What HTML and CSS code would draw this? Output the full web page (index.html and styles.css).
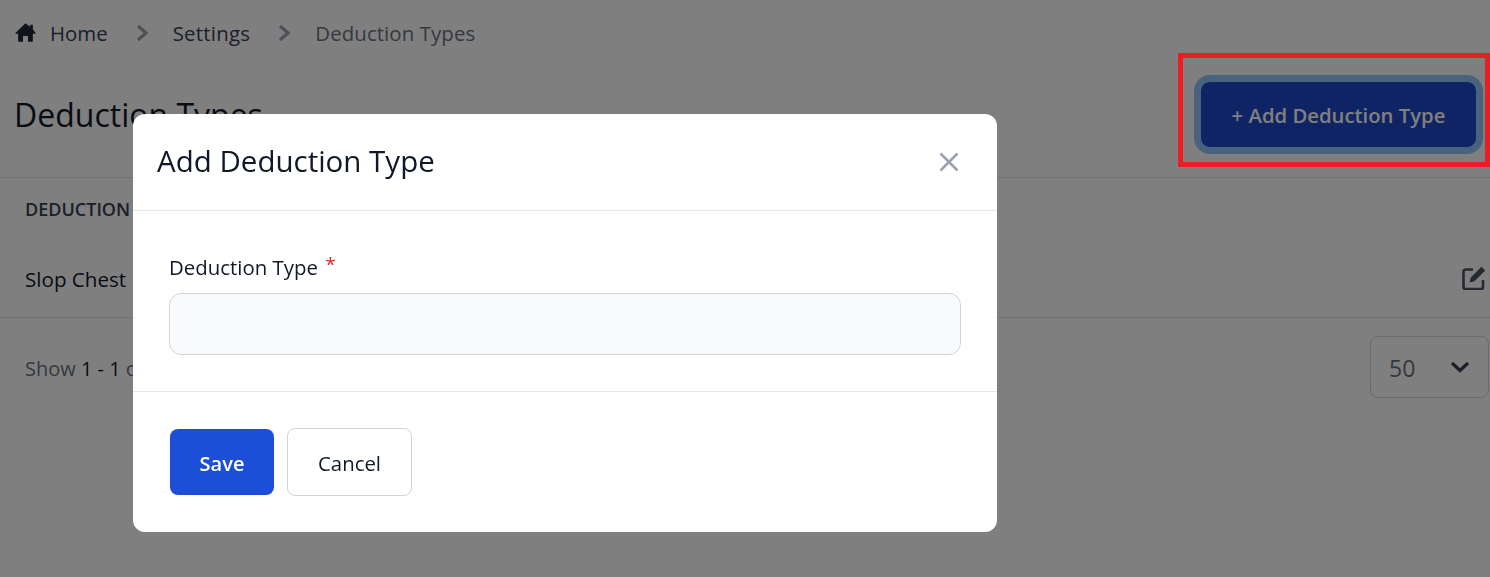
FILE: index.html
```html
<!DOCTYPE html>
<html lang="en">
<head>
    <meta charset="UTF-8">
    <title>Deduction Types</title>
    <link rel="stylesheet" href="styles.css">
</head>
<body>
    <nav class="crumbs">
        <svg class="home-icon" viewBox="0 0 20 20"><path d="M10 1.2 0.6 10.2c-.4.5-.1 1.1.5 1.1H3v6.6c0 .6.4 1 1 1h3.6v-5.6h4.8v5.6H16c.6 0 1-.4 1-1v-6.6h1.9c.6 0 .9-.6.5-1.1L17 7V2.6h-2.6v1.9z"/></svg>
        <span class="crumb">Home</span>
        <svg class="crumb-sep" viewBox="0 0 12 18"><path d="M2 2l8 7-8 7"/></svg>
        <span class="crumb wide">Settings</span>
        <svg class="crumb-sep" viewBox="0 0 12 18"><path d="M2 2l8 7-8 7"/></svg>
        <span class="crumb current">Deduction Types</span>
    </nav>

    <div class="title-row">
        <h1>Deduction Types</h1>
        <button class="add-btn">+ Add Deduction Type</button>
    </div>

    <div class="table-head">DEDUCTION TYPE</div>
    <div class="table-row">
        <span class="row-name">Slop Chest</span>
        <svg class="edit-icon" viewBox="0 0 24 24"><path class="edit-box" d="M11 3.5H3.5a2 2 0 0 0-2 2V21a2 2 0 0 0 2 2H19a2 2 0 0 0 2-2v-7"/><path class="edit-pen" d="M19.5.8l3.7 3.7-10.7 10.7-5 1.3 1.3-5z"/></svg>
    </div>
    <div class="table-foot">
        <span class="count">Show <b>1 - 1</b> of <b>1</b></span>
        <div class="per-page">
            <span class="per-page-value">50</span>
            <svg class="per-page-arrow" viewBox="0 0 20 12"><path d="M2 2 10 9.5 18 2"/></svg>
        </div>
    </div>

    <div class="overlay"></div>
    <div class="mark"></div>

    <div class="modal">
        <div class="modal-head">
            <h2>Add Deduction Type</h2>
            <svg class="close-icon" viewBox="0 0 20 20"><path d="M1.5 1.5l17 17M18.5 1.5l-17 17"/></svg>
        </div>
        <div class="modal-body">
            <label class="field-label">Deduction Type <em>*</em></label>
            <input class="field-input" type="text">
        </div>
        <div class="modal-foot">
            <button class="save-btn">Save</button>
            <button class="cancel-btn">Cancel</button>
        </div>
    </div>
</body>
</html>
```

FILE: styles.css
```css
* {
    margin: 0;
    padding: 0;
    box-sizing: border-box;
}
body {
    background: #fff;
    color: #111827;
    font-family: "Open Sans", "Noto Sans", sans-serif;
    height: 577px;
    overflow: hidden;
}
.crumbs {
    display: flex;
    align-items: center;
    height: 33px;
    margin-top: 16px;
    padding-left: 15px;
    font-size: 20.4px;
    font-weight: 500;
    color: #374151;
}
.home-icon {
    width: 21px;
    height: 21px;
    margin-top: -1px;
    margin-right: 14px;
    fill: #1f2937;
}
.crumb-sep {
    width: 12px;
    height: 18px;
    margin: 0 25px 0 28px;
    fill: none;
    stroke: #9ca3af;
    stroke-width: 3.2;
}
.crumb.wide {
    letter-spacing: .25px;
}
.crumb.current {
    color: #6b7280;
    letter-spacing: .1px;
}
.title-row {
    display: flex;
    justify-content: space-between;
    align-items: center;
    height: 129px;
    border-bottom: 1px solid #e5e7eb;
    padding: 0 13px 0 14px;
}
h1 {
    font-size: 32px;
    font-weight: 500;
    margin-top: 2px;
}
.add-btn {
    width: 277px;
    height: 67px;
    margin-top: 3px;
    border: 1px solid #93c5fd;
    border-radius: 10px;
    background: #1c48c8;
    box-shadow: 0 0 0 6px #93c5fd;
    color: #fff;
    font: 600 20.3px "Open Sans", sans-serif;
}
.table-head {
    height: 61px;
    line-height: 63px;
    padding-left: 25px;
    font-size: 18px;
    font-weight: 600;
    color: #374151;
}
.table-row {
    display: flex;
    justify-content: space-between;
    align-items: center;
    height: 79px;
    padding: 0 4px 0 25px;
    font-size: 20.6px;
    font-weight: 500;
    border-bottom: 1px solid #e5e7eb;
}
.row-name {
    margin-top: 1px;
}
.edit-icon {
    width: 24px;
    height: 24px;
    fill: none;
}
.edit-box {
    stroke: #4b5563;
    stroke-width: 2.6;
}
.edit-pen {
    fill: #4b5563;
}
.table-foot {
    display: flex;
    justify-content: space-between;
    align-items: center;
    height: 98px;
    padding: 0 1px 0 25px;
    font-size: 20px;
    color: #6b7280;
}
.count {
    margin-top: 2px;
}
.count b {
    font-weight: 500;
    color: #111827;
}
.per-page {
    display: flex;
    justify-content: space-between;
    align-items: center;
    width: 119px;
    height: 62px;
    padding: 0 18px;
    border: 1px solid #d1d5db;
    border-radius: 8px;
    font-size: 23px;
}
.per-page-value {
    margin-top: 2px;
}
.per-page-arrow {
    width: 20px;
    height: 12px;
    fill: none;
    stroke: #374151;
    stroke-width: 3.2;
}
.overlay {
    position: fixed;
    inset: 0;
    background: rgba(0, 0, 0, .5);
}
.mark {
    position: absolute;
    left: 1178px;
    top: 53px;
    width: 312px;
    height: 114px;
    border: 5px solid #ed1c24;
}
.modal {
    position: absolute;
    left: 133px;
    top: 114px;
    width: 864px;
    height: 418px;
    background: #fff;
    border-radius: 12px;
}
.modal-head {
    display: flex;
    justify-content: space-between;
    align-items: center;
    height: 97px;
    padding: 0 38px 0 24px;
    border-bottom: 1px solid #e5e7eb;
}
h2 {
    font-size: 29.5px;
    font-weight: 500;
    margin-bottom: 4px;
}
.close-icon {
    width: 20px;
    height: 20px;
    fill: none;
    stroke: #9ca3af;
    stroke-width: 2.6;
}
.modal-body {
    height: 181px;
    padding: 39px 36px 0;
    border-bottom: 1px solid #e5e7eb;
}
.field-label {
    display: block;
    height: 43px;
    font-size: 20.4px;
    font-weight: 500;
    line-height: 28px;
}
.field-label em {
    color: #e02424;
    font-size: 19px;
    font-style: normal;
    font-weight: 400;
    margin-left: 2px;
    vertical-align: 4px;
}
.field-input {
    display: block;
    width: 100%;
    height: 62px;
    background: #f9fafb;
    border: 1px solid #d1d5db;
    border-radius: 12px;
}
.modal-foot {
    display: flex;
    align-items: flex-start;
    gap: 13px;
    padding: 36px 36px 0 37px;
}
.save-btn {
    width: 104px;
    height: 66px;
    margin-top: 1px;
    padding-top: 2px;
    border: 0;
    border-radius: 8px;
    background: #1d4ed8;
    color: #fff;
    font: 600 20px "Open Sans", sans-serif;
}
.cancel-btn {
    width: 125px;
    height: 68px;
    padding-top: 2px;
    background: #fff;
    border: 1px solid #d1d5db;
    border-radius: 8px;
    color: #111827;
    font: 500 20.4px "Open Sans", sans-serif;
}
```
